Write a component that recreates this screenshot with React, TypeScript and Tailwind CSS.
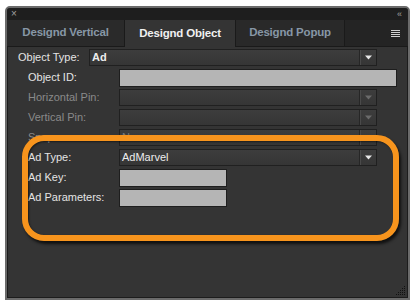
import React from "react";

function Arrow({ disabled }: { disabled?: boolean }) {
  return (
    <svg width="7" height="5" viewBox="0 0 7 5">
      <path d="M0 0.5 H7 L3.5 4.5 Z" fill={disabled ? "#6a6a6a" : "#e8e8e8"} />
    </svg>
  );
}

function Select({
  value,
  disabled,
  bold,
  wide,
}: {
  value?: string;
  disabled?: boolean;
  bold?: boolean;
  wide?: boolean;
}) {
  return (
    <div
      className={
        "h-[17px] flex items-stretch border border-[#202020] bg-gradient-to-b from-[#3d3d3d] to-[#353535] " +
        (wide ? "w-[288px]" : "w-[258px]")
      }
    >
      <span
        className={
          "flex-1 pl-[2px] leading-[15px] text-[11px] whitespace-nowrap " +
          (disabled ? "text-[#7a7a7a] " : "text-[#ededed] ") +
          (bold ? "font-bold" : "")
        }
      >
        {value}
      </span>
      <div className="w-px bg-[#262626]" />
      <div className="w-px bg-[#4a4a4a]" />
      <div className="w-[15px] flex items-center justify-center">
        <Arrow disabled={disabled} />
      </div>
    </div>
  );
}

function Input({ short }: { short?: boolean }) {
  return (
    <div
      className={
        "h-[18px] border border-[#1e1e1e] bg-[#b5b5b5] " +
        (short ? "w-[108px]" : "w-[278px]")
      }
    />
  );
}

function Label({
  children,
  disabled,
}: {
  children: React.ReactNode;
  disabled?: boolean;
}) {
  return (
    <div
      className={
        "w-[111px] pl-[20px] text-[11px] leading-[17px] whitespace-nowrap " +
        (disabled ? "text-[#8a8a8a]" : "text-[#e4e4e4]")
      }
    >
      {children}
    </div>
  );
}

export default function App() {
  return (
    <div className="w-[416px] h-[305px] bg-white pt-[6px] pl-[5px] font-['Liberation_Sans',Arial,sans-serif]">
      <div className="relative w-[405px] h-[294px] border-2 border-[#6b6b6b] rounded-t-[5px] bg-[#343434] flex flex-col overflow-hidden">
        {/* title bar */}
        <div className="h-[12px] bg-[#1e1e1e] flex items-center justify-between px-[4px] text-[#a0a0a0]">
          <span className="text-[10px] leading-[10px]">×</span>
          <span className="text-[9px] leading-[9px] tracking-[-1px] pr-[3px]">‹‹</span>
        </div>
        {/* tabs */}
        <div className="h-[27px] flex bg-[#242424]">
          <div className="w-[118px] bg-[#2a2a2a] border-r border-b border-[#1a1a1a] flex items-center justify-center text-[11.5px] tracking-[-0.2px] font-bold text-[#8797a6] whitespace-nowrap">
            Designd Vertical
          </div>
          <div className="w-[110px] bg-[#343434] flex items-center justify-center text-[11.5px] tracking-[-0.2px] font-bold text-[#f0f0f0] whitespace-nowrap">
            Designd Object
          </div>
          <div className="w-[110px] bg-[#292929] border-l border-r border-b border-[#1a1a1a] flex items-center justify-center text-[11.5px] tracking-[-0.2px] font-bold text-[#8797a6] whitespace-nowrap">
            Designd Popup
          </div>
          <div className="flex-1 border-b border-[#1a1a1a] flex items-center justify-end pr-[8px]">
            <div className="flex flex-col gap-[1px]">
              <div className="w-[9px] h-px bg-[#d0d0d0]" />
              <div className="w-[9px] h-px bg-[#d0d0d0]" />
              <div className="w-[9px] h-px bg-[#d0d0d0]" />
              <div className="w-[9px] h-px bg-[#d0d0d0]" />
            </div>
          </div>
        </div>
        {/* content */}
        <div className="flex-1 pt-[2px] flex flex-col gap-[3px] border-l border-r border-b border-[#1c1c1c]">
          <div className="flex h-[17px]">
            <div className="w-[81px] pl-[10px] text-[11px] leading-[17px] text-[#e4e4e4] whitespace-nowrap">
              Object Type:
            </div>
            <Select value="Ad" bold wide />
          </div>
          <div className="flex h-[17px]">
            <Label>Object ID:</Label>
            <Input />
          </div>
          <div className="flex h-[17px]">
            <Label disabled>Horizontal Pin:</Label>
            <Select disabled />
          </div>
          <div className="flex h-[17px]">
            <Label disabled>Vertical Pin:</Label>
            <Select disabled />
          </div>
          <div className="flex h-[17px]">
            <Label disabled>Snap:</Label>
            <Select value="None" disabled />
          </div>
          <div className="flex h-[17px]">
            <Label>Ad Type:</Label>
            <Select value="AdMarvel" />
          </div>
          <div className="flex h-[17px]">
            <Label>Ad Key:</Label>
            <Input short />
          </div>
          <div className="flex h-[17px]">
            <Label>Ad Parameters:</Label>
            <Input short />
          </div>

          {/* resize grip */}
          <svg
            className="absolute right-[2px] bottom-[2px]"
            width="10"
            height="10"
            viewBox="0 0 10 10"
          >
            {[
              [8, 0],
              [8, 2],
              [6, 2],
              [8, 4],
              [6, 4],
              [4, 4],
              [8, 6],
              [6, 6],
              [4, 6],
              [2, 6],
              [8, 8],
              [6, 8],
              [4, 8],
              [2, 8],
              [0, 8],
            ].map(([x, y], i) => (
              <rect key={i} x={x} y={y} width="1" height="1" fill="#111" />
            ))}
          </svg>
        </div>

        {/* orange annotation */}
        <div className="absolute left-[15px] top-[127px] w-[377px] h-[106px] border-[6px] border-[#f7941d] rounded-[22px] shadow-[2px_3px_3px_rgba(0,0,0,0.7),inset_1px_1px_2px_rgba(0,0,0,0.5)]" />
      </div>
    </div>
  );
}
